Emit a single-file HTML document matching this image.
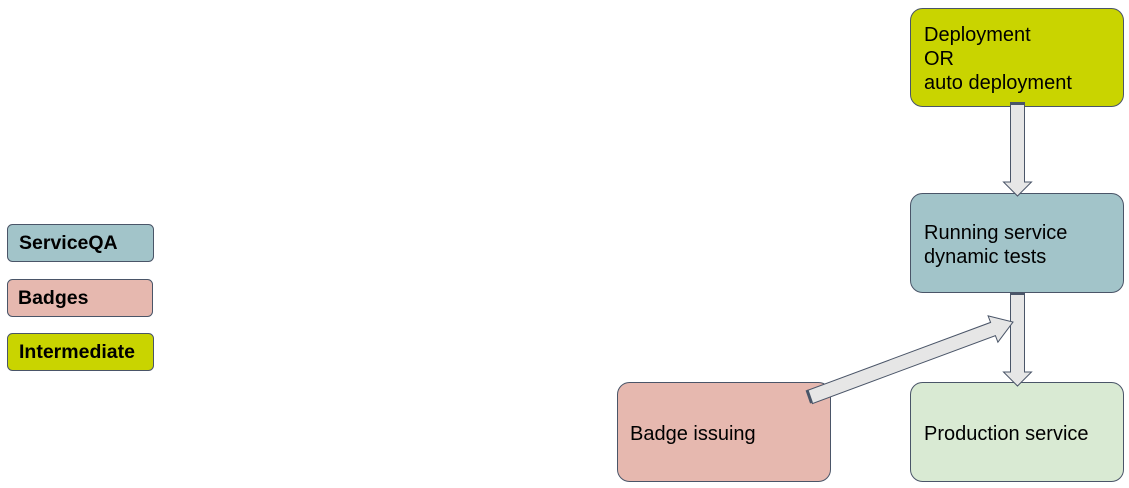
<!DOCTYPE html>
<html><head><style>
body{margin:0;background:#fff;}
svg{display:block;font-family:"Liberation Sans",Arial,sans-serif;}
</style></head><body>
<svg width="1129" height="488" viewBox="0 0 1129 488">
<g stroke="#4a5568" stroke-width="1">
<rect x="7.5" y="224.5" width="146" height="37" rx="5" fill="#a2c4c9"/>
<rect x="7.5" y="279.5" width="145" height="37" rx="5" fill="#e6b8af"/>
<rect x="7.5" y="333.5" width="146" height="37" rx="5" fill="#c9d400"/>
<rect x="910.5" y="8.5" width="213" height="98" rx="12" fill="#c9d400"/>
<rect x="910.5" y="193.5" width="213" height="99" rx="12" fill="#a2c4c9"/>
<rect x="910.5" y="382.5" width="213" height="99" rx="12" fill="#d9ead3"/>
<rect x="617.5" y="382.5" width="213" height="99" rx="12" fill="#e6b8af"/>
<path d="M1010.5 103 L1024.5 103 L1024.5 182 L1031.5 182 L1017.5 196 L1003.5 182 L1010.5 182 Z" fill="#e6e6e6"/>
<path d="M1010.5 293 L1024.5 293 L1024.5 372 L1031.5 372 L1017.5 386 L1003.5 372 L1010.5 372 Z" fill="#e6e6e6"/>
<path d="M807.6 390.4 L990.6 322.4 L988.1 315.9 L1013 322 L997.9 342.2 L995.4 335.6 L812.4 403.6 Z" fill="#e6e6e6"/>
</g>
<rect x="1010" y="102" width="15" height="3" fill="#4a5568"/>
<rect x="1010" y="292" width="15" height="3" fill="#4a5568"/>
<line x1="807" y1="390" x2="811.5" y2="403" stroke="#4a5568" stroke-width="3"/>
<g font-size="19.5" font-weight="bold" fill="#000">
<text x="19" y="249">ServiceQA</text>
<text x="18" y="304">Badges</text>
<text x="19" y="358">Intermediate</text>
</g>
<g font-size="20" fill="#000">
<text x="924" y="41">Deployment</text>
<text x="924" y="65">OR</text>
<text x="924" y="89">auto deployment</text>
<text x="924" y="239">Running service</text>
<text x="924" y="263">dynamic tests</text>
<text x="924" y="440">Production service</text>
<text x="630" y="440">Badge issuing</text>
</g>
</svg>
</body></html>
